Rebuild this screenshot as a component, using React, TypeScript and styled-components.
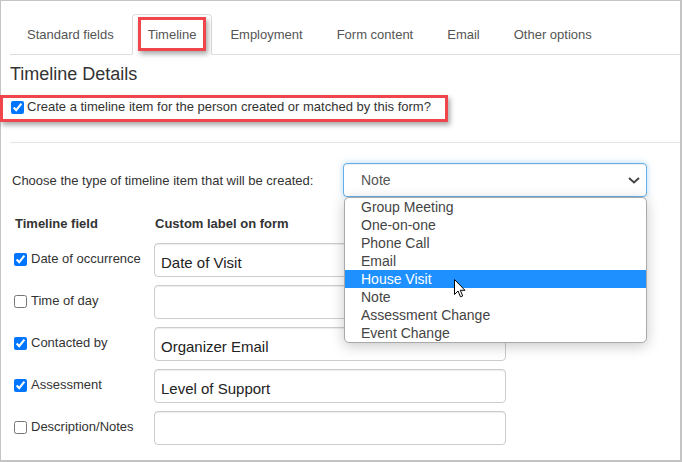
import React from "react";
import styled, { createGlobalStyle, css } from "styled-components";

const GlobalStyle = createGlobalStyle`
  html, body { margin: 0; padding: 0; background: #fff; }
  body { font-family: "Liberation Sans", Arial, sans-serif; color: #333; }
  *, *::before, *::after { box-sizing: border-box; }
`;

const Frame = styled.div`
  width: 682px;
  height: 462px;
  border: 1px solid #c4c4c4;
  border-right-width: 2px;
  border-bottom-width: 2px;
  padding-left: 9px;
  position: relative;
  background: #fff;
`;

const Tabs = styled.ul`
  display: flex;
  list-style: none;
  margin: 13px 0 0;
  padding: 0 0 0 1px;
  border-bottom: 1px solid #ddd;
`;

const Annot = css`
  content: "";
  position: absolute;
  border: 3px solid #f0454a;
  box-shadow: 2px 3px 5px rgba(0, 0, 0, 0.35);
  pointer-events: none;
`;

const Tab = styled.li<{ $active?: boolean; $marked?: boolean }>`
  position: relative;
  font-size: 13px;
  line-height: 19px;
  padding: 10px 15px;
  margin: 0 2px -1px 0;
  border: 1px solid transparent;
  border-radius: 4px 4px 0 0;
  color: #555;
  background: transparent;
  ${(p) =>
    p.$active &&
    css`
      border-color: #ddd #ddd transparent;
      background: #fff;
    `}
  ${(p) =>
    p.$marked &&
    css`
      &::after {
        ${Annot};
        left: 5px;
        top: 2px;
        width: 68px;
        height: 34px;
      }
    `}
`;

const Heading = styled.h4`
  margin: 9px 0 0;
  font-size: 18px;
  font-weight: 400;
  line-height: 20px;
  color: #333;
`;

const CreateRow = styled.label`
  position: relative;
  display: flex;
  align-items: center;
  margin-top: 15px;
  height: 16px;
  font-size: 13px;
  line-height: 16px;
  color: #333;
  &::after {
    ${Annot};
    left: -10px;
    top: -4px;
    width: 448px;
    height: 27px;
  }
`;

const Check = styled.input.attrs({ type: "checkbox" })<{ $gap?: number }>`
  width: 13px;
  height: 13px;
  margin: 0 ${(p) => p.$gap ?? 4}px 0 0;
  flex: none;
`;

const RowCheck = styled(Check)`
  margin-left: 1px;
`;

const Divider = styled.hr`
  margin: 27px 0 0;
  border: 0;
  border-top: 1px solid #e5e5e5;
  height: 0;
`;

const TypeRow = styled.div`
  display: flex;
  align-items: center;
  margin-top: 20px;
  padding-left: 2px;
`;

const TypeLabel = styled.span`
  width: 331px;
  font-size: 13px;
  color: #333;
`;

const SelectWrap = styled.div`
  position: relative;
  width: 304px;
`;

const SelectBox = styled.div`
  height: 34px;
  border: 1px solid #66afe9;
  border-radius: 4px;
  box-shadow: inset 0 1px 1px rgba(0, 0, 0, 0.075), 0 0 6px rgba(102, 175, 233, 0.5);
  display: flex;
  align-items: center;
  justify-content: space-between;
  padding: 0 4px 0 17px;
  font-size: 14px;
  color: #555;
  background: #fff;
`;

const Dropdown = styled.ul`
  position: absolute;
  top: 34px;
  left: 1px;
  width: 303px;
  margin: 0;
  padding: 0;
  list-style: none;
  background: #fff;
  border: 1px solid #a9a9a9;
  border-radius: 5px;
  box-shadow: 0 3px 14px rgba(0, 0, 0, 0.22);
  z-index: 10;
`;

const Option = styled.li<{ $selected?: boolean }>`
  position: relative;
  font-size: 14px;
  line-height: 18px;
  padding-left: 16px;
  color: #444;
  ${(p) =>
    p.$selected &&
    css`
      background: #1e90ff;
      color: #fff;
    `}
`;

const Cursor = styled.svg`
  position: absolute;
  left: 109px;
  top: 9px;
`;

const FieldGrid = styled.div`
  display: grid;
  grid-template-columns: 140px 352px;
  row-gap: 8px;
  margin-top: 18px;
  padding-left: 4px;
`;

const HeaderCell = styled.div`
  font-weight: bold;
  font-size: 13px;
  line-height: 18px;
  padding: 0 0 2px 1px;
  color: #333;
`;

const FieldLabel = styled.label`
  display: flex;
  align-items: center;
  align-self: start;
  padding-top: 8px;
  font-size: 13px;
  line-height: 16px;
  color: #333;
`;

const TextInput = styled.input`
  width: 352px;
  height: 34px;
  border: 1px solid #ccc;
  border-radius: 4px;
  padding: 8px 6px 4px;
  font-family: "Liberation Sans", Arial, sans-serif;
  font-size: 15px;
  color: #222;
  background: #fff;
  box-shadow: inset 0 1px 1px rgba(0, 0, 0, 0.075);
  outline: none;
`;

const tabs = ["Standard fields", "Timeline", "Employment", "Form content", "Email", "Other options"];
const options = [
  "Group Meeting",
  "One-on-one",
  "Phone Call",
  "Email",
  "House Visit",
  "Note",
  "Assessment Change",
  "Event Change",
];
const fields: { label: string; checked: boolean; value: string }[] = [
  { label: "Date of occurrence", checked: true, value: "Date of Visit" },
  { label: "Time of day", checked: false, value: "" },
  { label: "Contacted by", checked: true, value: "Organizer Email" },
  { label: "Assessment", checked: true, value: "Level of Support" },
  { label: "Description/Notes", checked: false, value: "" },
];

export default function App() {
  return (
    <>
      <GlobalStyle />
      <Frame>
        <Tabs>
          {tabs.map((t) => (
            <Tab key={t} $active={t === "Timeline"} $marked={t === "Timeline"}>
              {t}
            </Tab>
          ))}
        </Tabs>
        <Heading>Timeline Details</Heading>
        <CreateRow>
          <RowCheck defaultChecked $gap={3} />
          Create a timeline item for the person created or matched by this form?
        </CreateRow>
        <Divider />
        <TypeRow>
          <TypeLabel>Choose the type of timeline item that will be created:</TypeLabel>
          <SelectWrap>
            <SelectBox>
              Note
              <svg width="16" height="10" viewBox="0 0 16 10">
                <path d="M3 3 L8 7.5 L13 3" fill="none" stroke="#444" strokeWidth="2" />
              </svg>
            </SelectBox>
            <Dropdown>
              {options.map((o) => (
                <Option key={o} $selected={o === "House Visit"}>
                  {o}
                  {o === "House Visit" && (
                    <Cursor width="12" height="19" viewBox="0 0 12 19">
                      <path
                        d="M0.5 0.5 L0.5 15.5 L4 12 L6.5 17.8 L8.7 16.9 L6.3 11.3 L11 11.3 Z"
                        fill="#fff"
                        stroke="#000"
                        strokeWidth="1"
                        strokeLinejoin="miter"
                      />
                    </Cursor>
                  )}
                </Option>
              ))}
            </Dropdown>
          </SelectWrap>
        </TypeRow>
        <FieldGrid>
          <HeaderCell>Timeline field</HeaderCell>
          <HeaderCell>Custom label on form</HeaderCell>
          {fields.map((f) => (
            <React.Fragment key={f.label}>
              <FieldLabel>
                <Check defaultChecked={f.checked} $gap={4} />
                {f.label}
              </FieldLabel>
              <TextInput defaultValue={f.value} />
            </React.Fragment>
          ))}
        </FieldGrid>
      </Frame>
    </>
  );
}
